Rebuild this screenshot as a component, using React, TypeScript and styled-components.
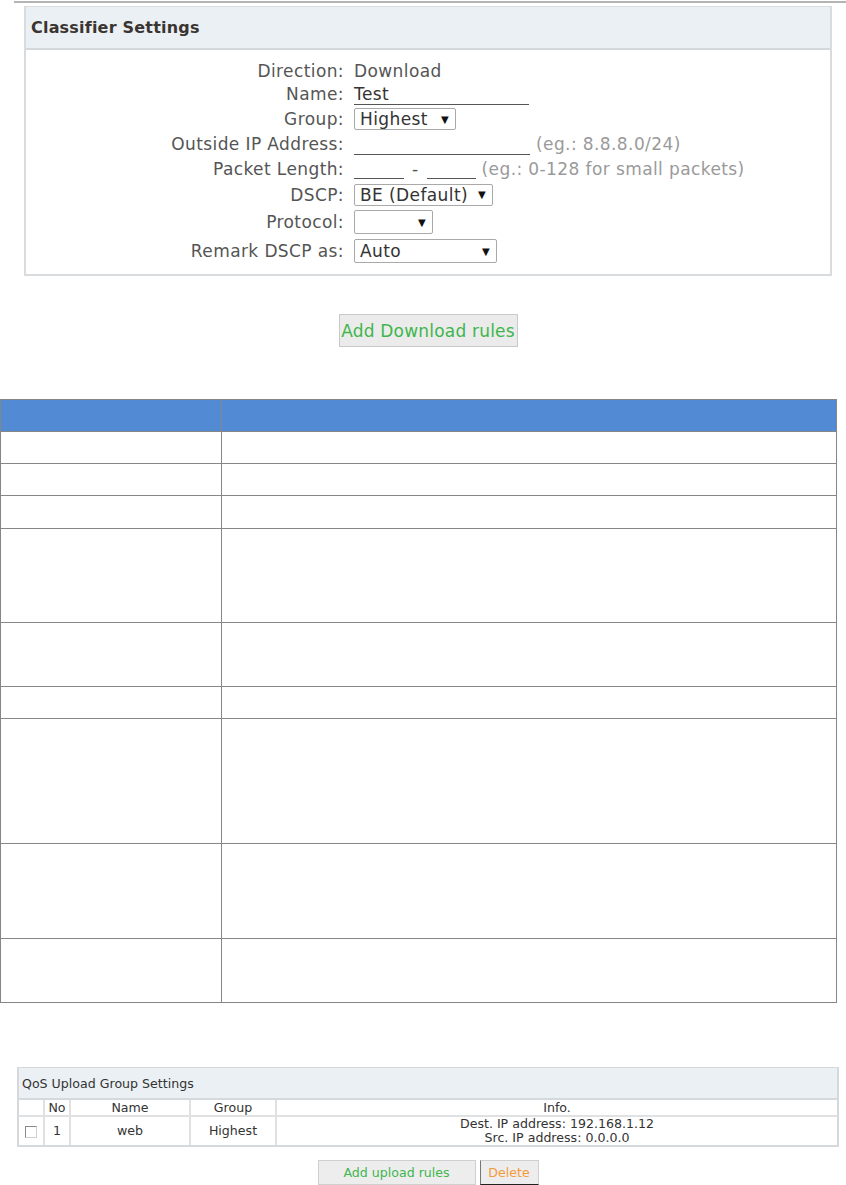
import React from "react";
import styled, { createGlobalStyle } from "styled-components";

const Global = createGlobalStyle`
  html, body { margin: 0; padding: 0; background: #fff; }
  body { font-family: "DejaVu Sans", Verdana, sans-serif; }
`;

const Page = styled.div`
  width: 846px;
  padding-top: 1px;
`;

const TopRule = styled.div`
  margin-left: 14px;
  height: 2px;
  background: #b4b4b4;
`;

const Panel = styled.section`
  margin: 3px 0 0 24px;
  width: 804px;
  border: 2px solid #d9dcdf;
  border-top-width: 1px;
`;

const PanelHeader = styled.div`
  height: 41px;
  display: flex;
  align-items: center;
  padding-left: 5px;
  background: #ebf0f5;
  border-bottom: 2px solid #d5d8da;
  font-size: 16px;
  letter-spacing: 0.2px;
  font-weight: bold;
  color: #3a3530;
`;

const PanelBody = styled.div`
  padding: 9px 0 8px;
  display: flex;
  flex-direction: column;
`;

const FormRow = styled.div<{ $h: number }>`
  height: ${(p) => p.$h}px;
  display: grid;
  grid-template-columns: 318px 1fr;
  column-gap: 10px;
  align-items: center;
  font-size: 17px;
  letter-spacing: 0.4px;
  color: #555;
`;

const Label = styled.div`
  text-align: right;
  white-space: nowrap;
`;

const Value = styled.div`
  display: flex;
  align-items: center;
  white-space: nowrap;
`;

const LineInput = styled.div<{ $w: number }>`
  width: ${(p) => p.$w}px;
  height: 20px;
  border-bottom: 1px solid #555;
  color: #333;
  line-height: 20px;
`;

const Hint = styled.span`
  color: #9a9a9a;
  margin-left: 6px;
`;

const Dash = styled.span`
  margin: 0 8px;
  color: #555;
`;

const Select = styled.div<{ $w: number; $h?: number }>`
  width: ${(p) => p.$w}px;
  height: ${(p) => p.$h ?? 22}px;
  box-sizing: border-box;
  border: 1px solid #a9a9a9;
  border-radius: 2px;
  display: flex;
  align-items: center;
  justify-content: space-between;
  padding: 0 6px 0 5px;
  color: #333;
  background: #fff;
`;

const Arrow = styled.span`
  font-size: 10px;
  color: #111;
`;

const Center = styled.div<{ $left: number; $width: number; $top: number }>`
  margin: ${(p) => p.$top}px 0 0 ${(p) => p.$left}px;
  width: ${(p) => p.$width}px;
  display: flex;
  justify-content: center;
  gap: 4px;
`;

const BigButton = styled.button`
  height: 33px;
  width: 179px;
  padding: 0;
  background: #ebebeb;
  border: 1px solid #c9c9c9;
  font-family: "DejaVu Sans", Verdana, sans-serif;
  font-size: 17px;
  letter-spacing: 0.2px;
  color: #3fb64d;
  white-space: nowrap;
`;

const Grid = styled.table`
  margin-top: 52px;
  width: 837px;
  border-collapse: collapse;
  td, th {
    border: 1px solid #868686;
    padding: 0;
  }
  th {
    background: #528bd3;
  }
  td:first-child, th:first-child {
    width: 220px;
  }
`;

const GridRow = styled.tr<{ $h: number }>`
  height: ${(p) => p.$h}px;
`;

const SmallPanel = styled.section`
  margin: 64px 0 0 17px;
  width: 818px;
  border: 2px solid #d6d9dc;
  border-top-width: 1px;
  font-size: 12.6px;
  color: #333;
`;

const SmallHeader = styled.div`
  height: 30px;
  display: flex;
  align-items: center;
  padding-left: 3px;
  background: #ebf0f5;
  border-bottom: 2px solid #d6d9dc;
`;

const ListTable = styled.table`
  width: 100%;
  border-collapse: collapse;
  text-align: center;
  th, td {
    padding: 0;
    font-weight: normal;
    border-left: 2px solid #dfe1e3;
  }
  th:first-child, td:first-child {
    border-left: none;
  }
  thead tr {
    height: 15px;
    border-bottom: 2px solid #dfe1e3;
  }
  th {
    line-height: 15px;
  }
  tbody tr {
    height: 28px;
  }
  td {
    line-height: 14px;
  }
`;

const Check = styled.span`
  display: inline-block;
  width: 10px;
  height: 10px;
  border: 1px solid #8a8a8a;
  border-right-color: #d0d0d0;
  border-bottom-color: #d0d0d0;
  vertical-align: middle;
`;

const SmallButton = styled.button<{ $w: number; $color: string; $pressed?: boolean }>`
  width: ${(p) => p.$w}px;
  height: 25px;
  padding: 0;
  background: #ededed;
  border: 1px solid #cfcfcf;
  ${(p) => (p.$pressed ? "border-bottom: 1px solid #222; border-left-color: #777;" : "")}
  font-family: "DejaVu Sans", Verdana, sans-serif;
  font-size: 12.6px;
  color: ${(p) => p.$color};
`;

const BottomRule = styled.div`
  margin-left: 17px;
  height: 1px;
  background: #c8c8c8;
`;

const rows: number[] = [32, 32, 33, 94, 64, 32, 125, 95, 64];

export default function App() {
  return (
    <Page>
      <Global />
      <TopRule />
      <Panel>
        <PanelHeader>Classifier Settings</PanelHeader>
        <PanelBody>
          <FormRow $h={23}>
            <Label>Direction:</Label>
            <Value>Download</Value>
          </FormRow>
          <FormRow $h={24}>
            <Label>Name:</Label>
            <Value>
              <LineInput $w={175}>Test</LineInput>
            </Value>
          </FormRow>
          <FormRow $h={26}>
            <Label>Group:</Label>
            <Value>
              <Select $w={102}>
                Highest <Arrow>▼</Arrow>
              </Select>
            </Value>
          </FormRow>
          <FormRow $h={24}>
            <Label>Outside IP Address:</Label>
            <Value>
              <LineInput $w={176} />
              <Hint>(eg.: 8.8.8.0/24)</Hint>
            </Value>
          </FormRow>
          <FormRow $h={25}>
            <Label>Packet Length:</Label>
            <Value>
              <LineInput $w={50} />
              <Dash>-</Dash>
              <LineInput $w={49} />
              <Hint>(eg.: 0-128 for small packets)</Hint>
            </Value>
          </FormRow>
          <FormRow $h={27}>
            <Label>DSCP:</Label>
            <Value>
              <Select $w={139}>
                BE (Default) <Arrow>▼</Arrow>
              </Select>
            </Value>
          </FormRow>
          <FormRow $h={28}>
            <Label>Protocol:</Label>
            <Value>
              <Select $w={79} $h={24}>
                <span /> <Arrow>▼</Arrow>
              </Select>
            </Value>
          </FormRow>
          <FormRow $h={30}>
            <Label>Remark DSCP as:</Label>
            <Value>
              <Select $w={143} $h={24}>
                Auto <Arrow>▼</Arrow>
              </Select>
            </Value>
          </FormRow>
        </PanelBody>
      </Panel>

      <Center $left={24} $width={808} $top={38}>
        <BigButton>Add Download rules</BigButton>
      </Center>

      <Grid>
        <thead>
          <GridRow $h={32}>
            <th />
            <th />
          </GridRow>
        </thead>
        <tbody>
          {rows.map((h, i) => (
            <GridRow key={i} $h={h}>
              <td />
              <td />
            </GridRow>
          ))}
        </tbody>
      </Grid>

      <SmallPanel>
        <SmallHeader>QoS Upload Group Settings</SmallHeader>
        <ListTable>
          <thead>
            <tr>
              <th style={{ width: 24 }} />
              <th style={{ width: 24 }}>No</th>
              <th style={{ width: 118 }}>Name</th>
              <th style={{ width: 84 }}>Group</th>
              <th>Info.</th>
            </tr>
          </thead>
          <tbody>
            <tr>
              <td>
                <Check />
              </td>
              <td>1</td>
              <td>web</td>
              <td>Highest</td>
              <td>
                Dest. IP address: 192.168.1.12
                <br />
                Src. IP address: 0.0.0.0
              </td>
            </tr>
          </tbody>
        </ListTable>
      </SmallPanel>

      <Center $left={17} $width={822} $top={13}>
        <SmallButton $w={158} $color="#3fb64d">Add upload rules</SmallButton>
        <SmallButton $w={59} $color="#f59a3a" $pressed>
          Delete
        </SmallButton>
      </Center>
      <BottomRule />
    </Page>
  );
}
